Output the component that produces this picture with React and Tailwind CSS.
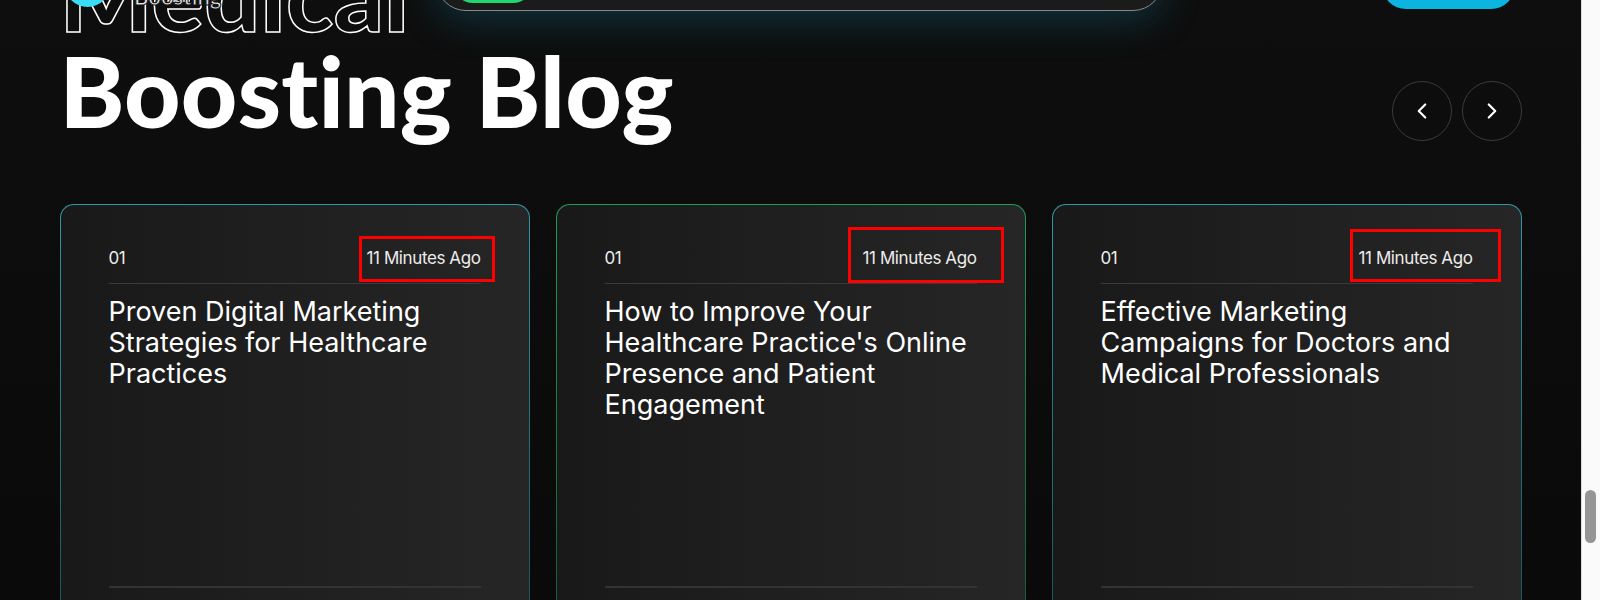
import React from 'react'
import { ChevronLeft, ChevronRight } from 'lucide-react'

const posts = [
  {
    id: 1,
    title: 'Proven Digital Marketing Strategies for Healthcare Practices',
    border: 'from-[#2f98a6] to-[#1a4f57]',
    mark: 'left-[299px] top-[32px] w-[136px] h-[46px]',
  },
  {
    id: 2,
    title: "How to Improve Your Healthcare Practice's Online Presence and Patient Engagement",
    border: 'from-[#1f9d58] to-[#17563a]',
    mark: 'left-[292px] top-[23px] w-[156px] h-[56px]',
  },
  {
    id: 3,
    title: 'Effective Marketing Campaigns for Doctors and Medical Professionals',
    border: 'from-[#2f98a6] to-[#1a4f57]',
    mark: 'left-[298px] top-[25px] w-[151px] h-[53px]',
  },
]

export default function App() {
  return (
    <div className="flex h-[600px] w-full overflow-hidden bg-[#0d0d0d] font-[Lato,sans-serif] text-white">
      <main className="relative h-full flex-1 overflow-hidden bg-gradient-to-b from-[#0e0e0e] to-[#0a0a0a]">
        {/* Header (fixed, mostly scrolled off) */}
        <div className="absolute left-[65px] top-[-38px] z-10 h-[45px] w-[45px] rounded-full bg-[#3adcf5]" />
        <span className="absolute left-[134px] top-[-20px] z-10 text-[22px] font-bold text-[#e8e8e8] [-webkit-text-stroke:1px_#111]">
          Boosting
        </span>
        <div className="absolute left-[436px] top-[-50px] z-10 flex h-[61px] w-[727px] items-end rounded-[30px] border border-[#8a8a8a] bg-[#1b1b1b] px-4 pb-[7px] shadow-[0_8px_40px_rgba(20,150,190,0.28)]">
          <div className="h-[40px] w-[80px] rounded-full bg-[#1fd66f]" />
        </div>
        <div className="absolute left-[1382px] top-[-40px] z-10 h-[49px] w-[133px] rounded-[24px] bg-[#0cb4e0]" />

        <div className="mx-auto w-[1462px]">
          {/* Heading row */}
          <div className="flex items-end justify-between">
            <h2 className="-mt-[54px] text-[98px] font-black leading-[96px] tracking-[0.2px]">
              <span className="block text-transparent [-webkit-text-stroke:1.5px_#ffffff]">Medical</span>
              <span className="block">Boosting Blog</span>
            </h2>
            <div className="flex translate-y-[3px] gap-[10px]">
              <button className="flex h-[60px] w-[60px] items-center justify-center rounded-full border-[1.5px] border-[#3a3a3a] text-white">
                <ChevronLeft size={26} strokeWidth={2} />
              </button>
              <button className="flex h-[60px] w-[60px] items-center justify-center rounded-full border-[1.5px] border-[#3a3a3a] text-white">
                <ChevronRight size={26} strokeWidth={2} />
              </button>
            </div>
          </div>

          {/* Cards */}
          <div className="mt-[66px] grid grid-cols-3 gap-[26px]">
            {posts.map((post) => (
              <div key={post.id} className={`relative rounded-[14px] bg-gradient-to-b p-px ${post.border}`}>
                <div className="flex h-[440px] flex-col rounded-[13px] bg-gradient-to-r from-[#191919] to-[#262626] px-[48px] pt-[41px] font-[Inter,sans-serif]">
                  <div className="flex items-center justify-between border-b border-[#3a3a3a] pb-[13px] text-[17px] leading-[24px] tracking-[-0.4px] text-[#ececec]">
                    <span>01</span>
                    <span>11 Minutes Ago</span>
                  </div>
                  <h3 className="mt-[12px] text-[27px] font-normal leading-[31px] text-white">{post.title}</h3>
                  <div className="mt-auto mb-[57px] h-[2px] w-full bg-[#333333]" />
                </div>
                <div className={`absolute border-[3px] border-[#ff0000] ${post.mark}`} />
              </div>
            ))}
          </div>
        </div>
      </main>

      {/* Scrollbar */}
      <div className="relative h-full w-[19px] border-l border-[#dcdcdc] bg-[#fafafa]">
        <div className="absolute left-[3px] top-[490px] h-[53px] w-[11px] rounded-full bg-[#959595]" />
      </div>
    </div>
  )
}
